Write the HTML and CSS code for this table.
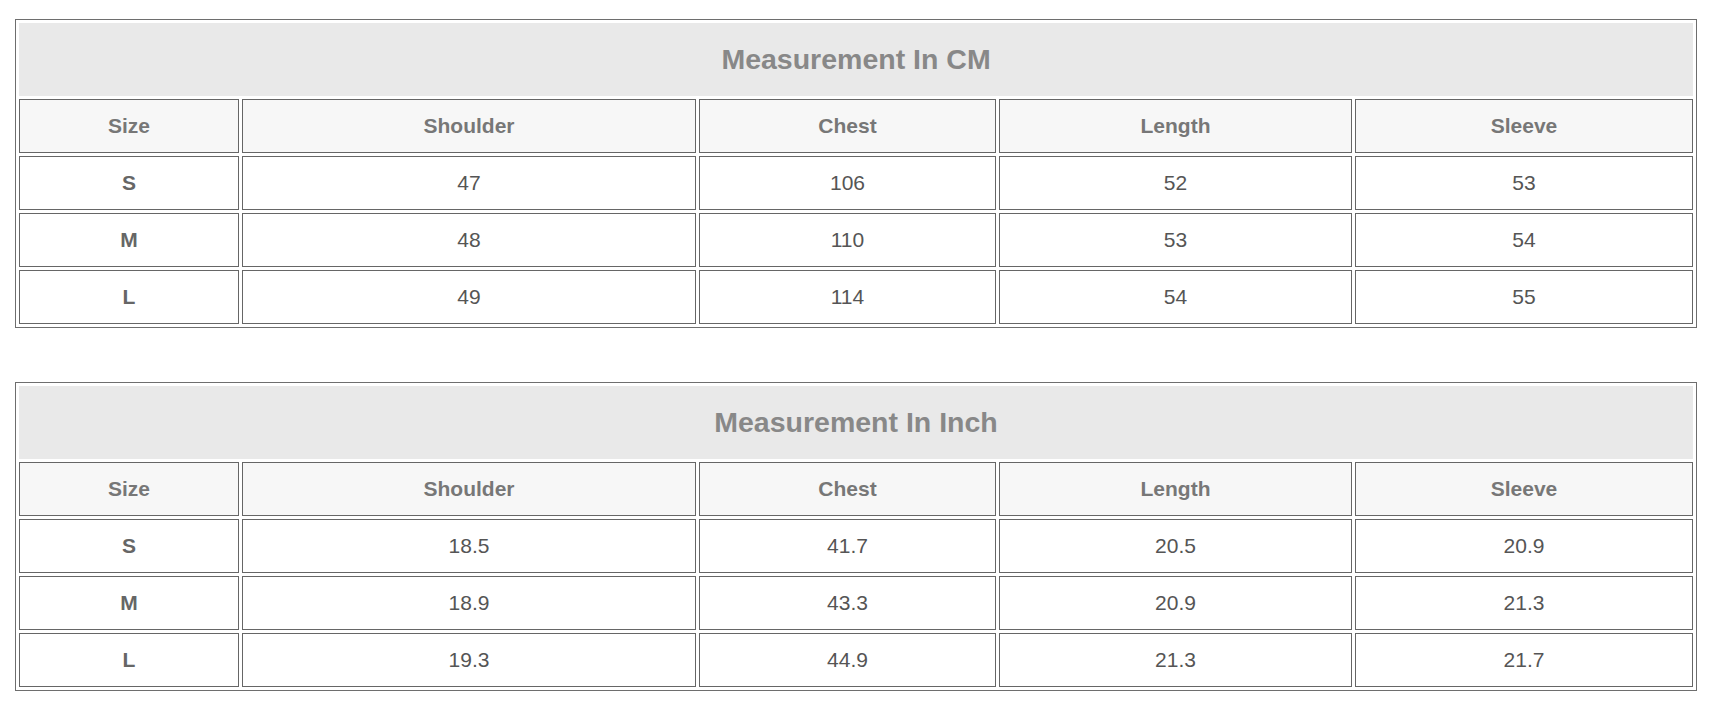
FILE: index.html
```html
<!DOCTYPE html>
<html>
<head>
<meta charset="utf-8">
<link rel="stylesheet" href="styles.css">
</head>
<body>
<div class="page">
  <table class="size-table">
    <colgroup>
      <col class="c-size"><col class="c-shoulder"><col class="c-chest"><col class="c-length"><col class="c-sleeve">
    </colgroup>
    <tr><th class="caption" colspan="5">Measurement In CM</th></tr>
    <tr class="head"><th>Size</th><th>Shoulder</th><th>Chest</th><th>Length</th><th>Sleeve</th></tr>
    <tr><th class="sz">S</th><td>47</td><td>106</td><td>52</td><td>53</td></tr>
    <tr><th class="sz">M</th><td>48</td><td>110</td><td>53</td><td>54</td></tr>
    <tr><th class="sz">L</th><td>49</td><td>114</td><td>54</td><td>55</td></tr>
  </table>
  <table class="size-table">
    <colgroup>
      <col class="c-size"><col class="c-shoulder"><col class="c-chest"><col class="c-length"><col class="c-sleeve">
    </colgroup>
    <tr><th class="caption" colspan="5">Measurement In Inch</th></tr>
    <tr class="head"><th>Size</th><th>Shoulder</th><th>Chest</th><th>Length</th><th>Sleeve</th></tr>
    <tr><th class="sz">S</th><td>18.5</td><td>41.7</td><td>20.5</td><td>20.9</td></tr>
    <tr><th class="sz">M</th><td>18.9</td><td>43.3</td><td>20.9</td><td>21.3</td></tr>
    <tr><th class="sz">L</th><td>19.3</td><td>44.9</td><td>21.3</td><td>21.7</td></tr>
  </table>
</div>
</body>
</html>
```

FILE: styles.css
```css
html, body {
  margin: 0;
  padding: 0;
  background: #ffffff;
}
body {
  font-family: "Liberation Sans", Arial, Helvetica, sans-serif;
}
.page {
  display: flex;
  flex-direction: column;
  gap: 54px;
  padding: 19px 0 0 15px;
}
.size-table {
  width: 1682px;
  table-layout: fixed;
  border-collapse: separate;
  border-spacing: 3px;
  border: 1px solid #6e6e6e;
}
.c-size { width: 220px; }
.c-shoulder { width: 454px; }
.c-chest { width: 297px; }
.c-length { width: 353px; }
.c-sleeve { width: 338px; }

.size-table th,
.size-table td {
  box-sizing: border-box;
  border: 1px solid #666666;
  padding: 0;
  height: 54px;
  text-align: center;
  vertical-align: middle;
  font-size: 21px;
}
.size-table th.caption {
  height: 73px;
  border: none;
  background: #e9e9e9;
  color: #888888;
  font-size: 28.5px;
  font-weight: bold;
}
.size-table tr.head th {
  background: #f7f7f7;
  color: #777777;
  font-weight: bold;
}
.size-table th.sz {
  color: #666666;
  font-weight: bold;
}
.size-table td {
  color: #555555;
  font-weight: normal;
}
```
